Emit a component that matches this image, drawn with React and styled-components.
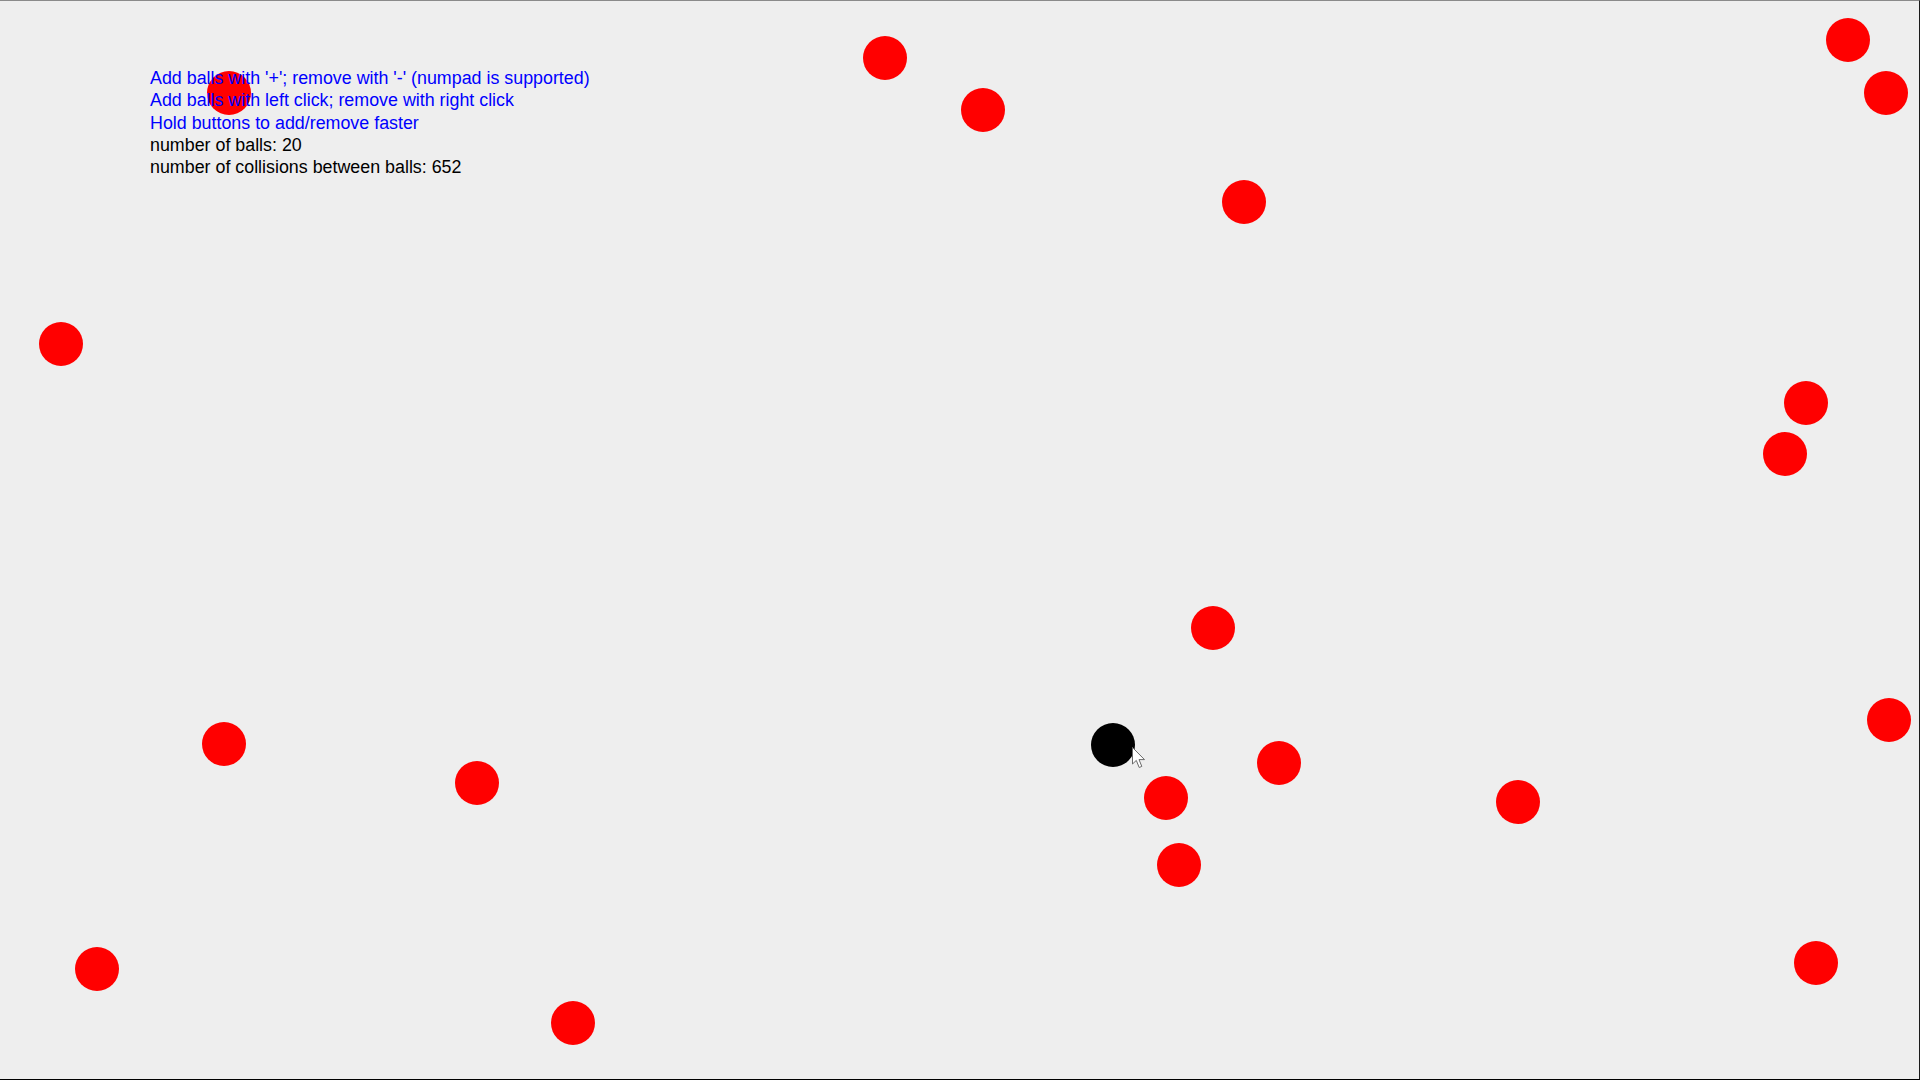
import React from 'react';
import styled, { createGlobalStyle } from 'styled-components';

const GlobalStyle = createGlobalStyle`
  html, body {
    margin: 0;
    padding: 0;
    background: #eeeeee;
    overflow: hidden;
  }
`

const Arena = styled.div`
  position: relative;
  box-sizing: border-box;
  width: 100vw;
  height: 100vh;
  background: #eeeeee;
  border-top: 1px solid #8a8a8a;
  border-right: 1px solid #1a1a1a;
  border-bottom: 1px solid #000000;
  padding: 66px 0 0 150px;
  overflow: hidden;
  font-family: "Liberation Sans", Arial, sans-serif;
`
const Info = styled.div`
  position: relative;
  z-index: 2;
  display: flex;
  flex-direction: column;
  font-size: 17.85px;
  line-height: 22.3px;
`
const Line = styled.div`
  color: ${p => (p.hint ? '#0000ff' : '#000000')};
  white-space: nowrap;
`
const Ball = styled.div`
  position: absolute;
  z-index: 1;
  width: 44px;
  height: 44px;
  margin: -22px 0 0 -22px;
  border-radius: 50%;
  background: ${p => (p.player ? '#000000' : '#ff0000')};
`
const Pointer = styled.svg`
  position: absolute;
  z-index: 3;
  left: 1132px;
  top: 746px;
  width: 15px;
  height: 22px;
`

const balls = [
  [229, 92], [885, 57], [983, 109], [1244, 201], [1848, 39], [1886, 92],
  [61, 343], [1806, 402], [1785, 453], [1213, 627], [1889, 719], [224, 743],
  [477, 782], [1279, 762], [1166, 797], [1179, 864], [1518, 801], [97, 968],
  [573, 1022], [1816, 962],
]

export default function App() {
  return (
    <>
      <GlobalStyle />
      <Arena>
        <Info>
          <Line hint>Add balls with '+'; remove with '-' (numpad is supported)</Line>
          <Line hint>Add balls with left click; remove with right click</Line>
          <Line hint>Hold buttons to add/remove faster</Line>
          <Line>number of balls: {balls.length}</Line>
          <Line>number of collisions between balls: 652</Line>
        </Info>
        {balls.map(([x, y], i) => (
          <Ball key={i} style={{ left: x, top: y }} />
        ))}
        <Ball player style={{ left: 1113, top: 744 }} />
        <Pointer viewBox="0 0 15 22">
          <path
            d="M0.5 0.5 L0.5 17 L4.3 13.4 L7.2 20.5 L9.8 19.4 L7 12.6 L12.5 12.6 Z"
            fill="#ffffff"
            stroke="#6a6a6a"
            strokeWidth="1"
            strokeLinejoin="round"
          />
        </Pointer>
      </Arena>
    </>
  )
}
